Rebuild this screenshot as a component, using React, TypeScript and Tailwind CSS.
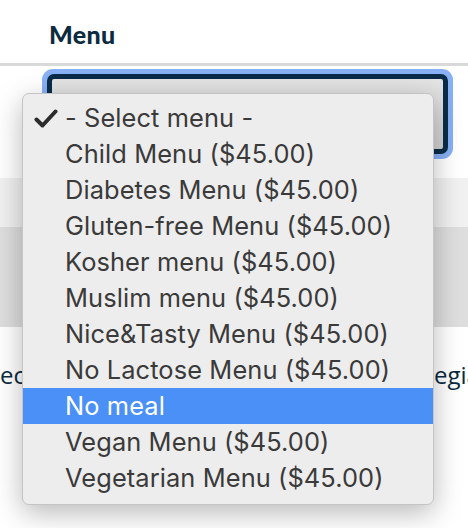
import React from "react";

const items = [
  "- Select menu -",
  "Child Menu ($45.00)",
  "Diabetes Menu ($45.00)",
  "Gluten-free Menu ($45.00)",
  "Kosher menu ($45.00)",
  "Muslim menu ($45.00)",
  "Nice&Tasty Menu ($45.00)",
  "No Lactose Menu ($45.00)",
  "No meal",
  "Vegan Menu ($45.00)",
  "Vegetarian Menu ($45.00)",
];

function Check() {
  return (
    <svg width="24" height="19" viewBox="0 0 24 19" fill="none">
      <path
        d="M2.5 10.5 L8.5 16.5 L21.5 2.5"
        stroke="#2c2c2c"
        strokeWidth="4"
        strokeLinecap="round"
        strokeLinejoin="round"
      />
    </svg>
  );
}

export default function App() {
  return (
    <div className="relative w-[468px] h-[528px] overflow-hidden bg-white">
      <div className="h-[63px] pt-[22px] pl-[49px]">
        <div
          className="text-[25px] leading-[25px] font-black text-[#0b2b3f] tracking-[0.3px]"
          style={{ fontFamily: "Lato, 'Noto Sans', sans-serif" }}
        >
          Menu
        </div>
      </div>
      <div className="h-[3px] bg-[#d9d9d9]" />
      <div className="h-[112px] pt-[3px] pl-[42px]">
        <div className="w-[411px] h-[90px] rounded-[11px] bg-[#88b0f5] p-[5px]">
          <div className="w-full h-full rounded-[7px] border-[5px] border-[#0b2c48] bg-gradient-to-b from-[#e4e4e4] to-[#d2d2d2]" />
        </div>
      </div>
      <div className="h-[49px] bg-[#f1f1f1]" />
      <div className="h-[100px] bg-[#dedede]" />
      <div
        className="flex pt-[33px] whitespace-nowrap overflow-hidden text-[24px] leading-[30px] text-[#0b2b3f]"
        style={{ fontFamily: "'Open Sans', sans-serif" }}
      >
        <span className="w-[434px] shrink-0">ec</span>
        <span>egia</span>
      </div>

      <div
        className="absolute left-[22px] top-[93px] w-[412px] h-[412px] rounded-[7px] bg-[#ededed] border border-[#c4c4c4] shadow-[0_8px_28px_rgba(0,0,0,0.28)] pt-[6px]"
        style={{ fontFamily: "Inter, 'Liberation Sans', sans-serif" }}
      >
        {items.map((t, i) => {
          const sel = t === "No meal";
          return (
            <div
              key={t}
              className={
                sel
                  ? "flex items-center h-[36px] bg-[#4a90f7] text-white"
                  : "flex items-center h-[36px] text-[#3a3a3a]"
              }
            >
              <div className="w-[42px] shrink-0 pl-[11px] flex items-center">
                {i === 0 ? <Check /> : null}
              </div>
              <span className="text-[25.4px] leading-[36px] whitespace-nowrap tracking-[0.1px]">
                {t}
              </span>
            </div>
          );
        })}
      </div>
    </div>
  );
}
